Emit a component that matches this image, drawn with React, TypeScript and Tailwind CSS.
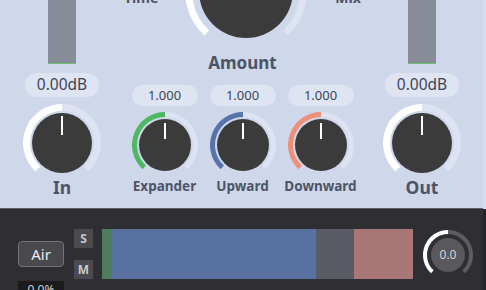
import React from "react";

const pt = (cx: number, cy: number, r: number, a: number) => {
  const rad = (a * Math.PI) / 180;
  return [cx + r * Math.sin(rad), cy - r * Math.cos(rad)];
};

const arc = (cx: number, cy: number, r: number, a0: number, a1: number) => {
  const [x0, y0] = pt(cx, cy, r, a0);
  const [x1, y1] = pt(cx, cy, r, a1);
  const large = a1 - a0 > 180 ? 1 : 0;
  return `M ${x0} ${y0} A ${r} ${r} 0 ${large} 1 ${x1} ${y1}`;
};

type KnobProps = {
  size: number;
  ring: number;
  body: number;
  color: string;
  track: string;
  lineFrom: number;
  lineTo: number;
};

const Knob = ({ size, ring, body, color, track, lineFrom, lineTo }: KnobProps) => {
  const c = size / 2;
  const r = c - ring / 2;
  return (
    <svg width={size} height={size} viewBox={`0 0 ${size} ${size}`}>
      <path d={arc(c, c, r, 0, 137)} stroke={track} strokeWidth={ring} fill="none" />
      <path d={arc(c, c, r, -137, 0)} stroke={color} strokeWidth={ring} fill="none" />
      <circle cx={c} cy={c} r={body} fill="#3b3b3b" />
      <line x1={c} y1={c - lineFrom} x2={c} y2={c - lineTo} stroke="#fff" strokeWidth={2} />
    </svg>
  );
};

const Pill = ({ text, big }: { text: string; big?: boolean }) => (
  <div
    className={
      big
        ? "w-[74px] h-[24px] rounded-full bg-[#dee4f2] flex items-center justify-center text-[15.5px] text-[#3f4656]"
        : "w-[66px] h-[21px] rounded-full bg-[#dee4f2] flex items-center justify-center text-[13px] text-[#3f4656]"
    }
  >
    {text}
  </div>
);

const SmallKnob = ({ label, color, value }: { label: string; color: string; value: string }) => (
  <div className="w-[78px] flex flex-col items-center">
    <Pill text={value} />
    <div className="mt-[6px]">
      <Knob size={66} ring={5} body={26} color={color} track="#dde3f2" lineFrom={6} lineTo={22} />
    </div>
    <div className="text-[13.5px] font-bold leading-[17px] text-[#4c5467]">{label}</div>
  </div>
);

const Side = ({ label }: { label: string }) => (
  <div className="flex flex-col items-center">
    <div className="w-[28px] h-[64px] bg-[#878c98] border-b border-[#6cbf6c]" />
    <div className="mt-[9px]">
      <Pill text="0.00dB" big />
    </div>
    <div className="mt-[7px]">
      <Knob size={78} ring={7} body={30} color="#ffffff" track="#dde3f2" lineFrom={8} lineTo={27} />
    </div>
    <div className="-mt-[5px] text-[17.5px] font-bold leading-[20px] text-[#4c5467]">{label}</div>
  </div>
);

export default function App() {
  return (
    <div className="w-[486px] h-[290px] overflow-hidden flex font-['Noto_Sans',sans-serif]">
      <div className="w-[483px] flex flex-col">
        <div className="h-[209px] shrink-0 bg-[#cfd7eb] flex overflow-hidden border-b border-[#5b606c]">
          <div className="w-[124px] flex justify-center">
            <Side label="In" />
          </div>
          <div className="w-[237px] flex flex-col">
            <div className="flex items-start justify-between">
              <div className="-mt-[11px] w-[32px] text-center text-[14px] font-bold leading-[17px] text-[#4c5467]">
                Time
              </div>
              <div className="-mt-[70px]">
                <svg width={122} height={122} viewBox="0 0 122 122">
                  <path d={arc(61, 61, 57.5, 0, 137)} stroke="#dde3f2" strokeWidth={7} fill="none" />
                  <path d={arc(61, 61, 57.5, -137, 0)} stroke="#ffffff" strokeWidth={7} fill="none" />
                  <circle cx={61} cy={61} r={47} fill="#3b3b3b" />
                </svg>
              </div>
              <div className="-mt-[11px] w-[26px] text-center text-[14px] font-bold leading-[17px] text-[#4c5467]">
                Mix
              </div>
            </div>
            <div className="mt-[1px] text-center text-[17px] font-bold leading-[20px] text-[#4c5467]">Amount</div>
            <div className="mt-[12px] flex justify-center">
              <SmallKnob label="Expander" color="#4db860" value="1.000" />
              <SmallKnob label="Upward" color="#5773aa" value="1.000" />
              <SmallKnob label="Downward" color="#f08f78" value="1.000" />
            </div>
          </div>
          <div className="w-[122px] flex justify-center">
            <Side label="Out" />
          </div>
        </div>
        <div className="flex-1 min-h-0 bg-[#2e2e33] flex items-start pl-[18px]">
          <div className="w-[46px] flex flex-col">
            <div className="mt-[32px] h-[26px] rounded-[4px] bg-[#48484d] border border-[#727277] flex items-center justify-center text-[15px] text-[#ececee]">
              Air
            </div>
            <div className="mt-[14px] h-[18px] bg-[#1b1b1e] flex justify-center pt-[2px] text-[12px] leading-[14px] text-[#d0d0d4]">
              0.0%
            </div>
          </div>
          <div className="ml-[10px] mt-[20px] flex flex-col gap-[12px]">
            <div className="w-[19px] h-[19px] bg-[#4a4a4f] flex items-center justify-center text-[12px] font-bold text-[#c8c8cc]">
              S
            </div>
            <div className="w-[19px] h-[19px] bg-[#4a4a4f] flex items-center justify-center text-[12px] font-bold text-[#c8c8cc]">
              M
            </div>
          </div>
          <div className="ml-[9px] mt-[20px] w-[311px] h-[50px] flex">
            <div className="w-[10px] bg-[#4e7c5c]" />
            <div className="w-[204px] bg-[#5871a0]" />
            <div className="w-[38px] bg-[#595c64]" />
            <div className="flex-1 bg-[#a87776]" />
          </div>
          <div className="ml-[8px] mt-[19px] relative w-[54px] h-[54px]">
            <svg width={54} height={54} viewBox="0 0 54 54">
              <path d={arc(27, 27, 23, 0, 137)} stroke="#5c5c61" strokeWidth={4} fill="none" />
              <path d={arc(27, 27, 23, -137, 0)} stroke="#ffffff" strokeWidth={4} fill="none" />
              <circle cx={27} cy={27} r={17} fill="#58585d" />
            </svg>
            <div className="absolute inset-0 flex items-center justify-center text-[12px] text-[#d4d4d8]">0.0</div>
          </div>
        </div>
      </div>
      <div className="w-[3px] flex flex-col">
        <div className="h-[209px] bg-[#d6dcef]" />
        <div className="flex-1 bg-[#252529]" />
      </div>
    </div>
  );
}
